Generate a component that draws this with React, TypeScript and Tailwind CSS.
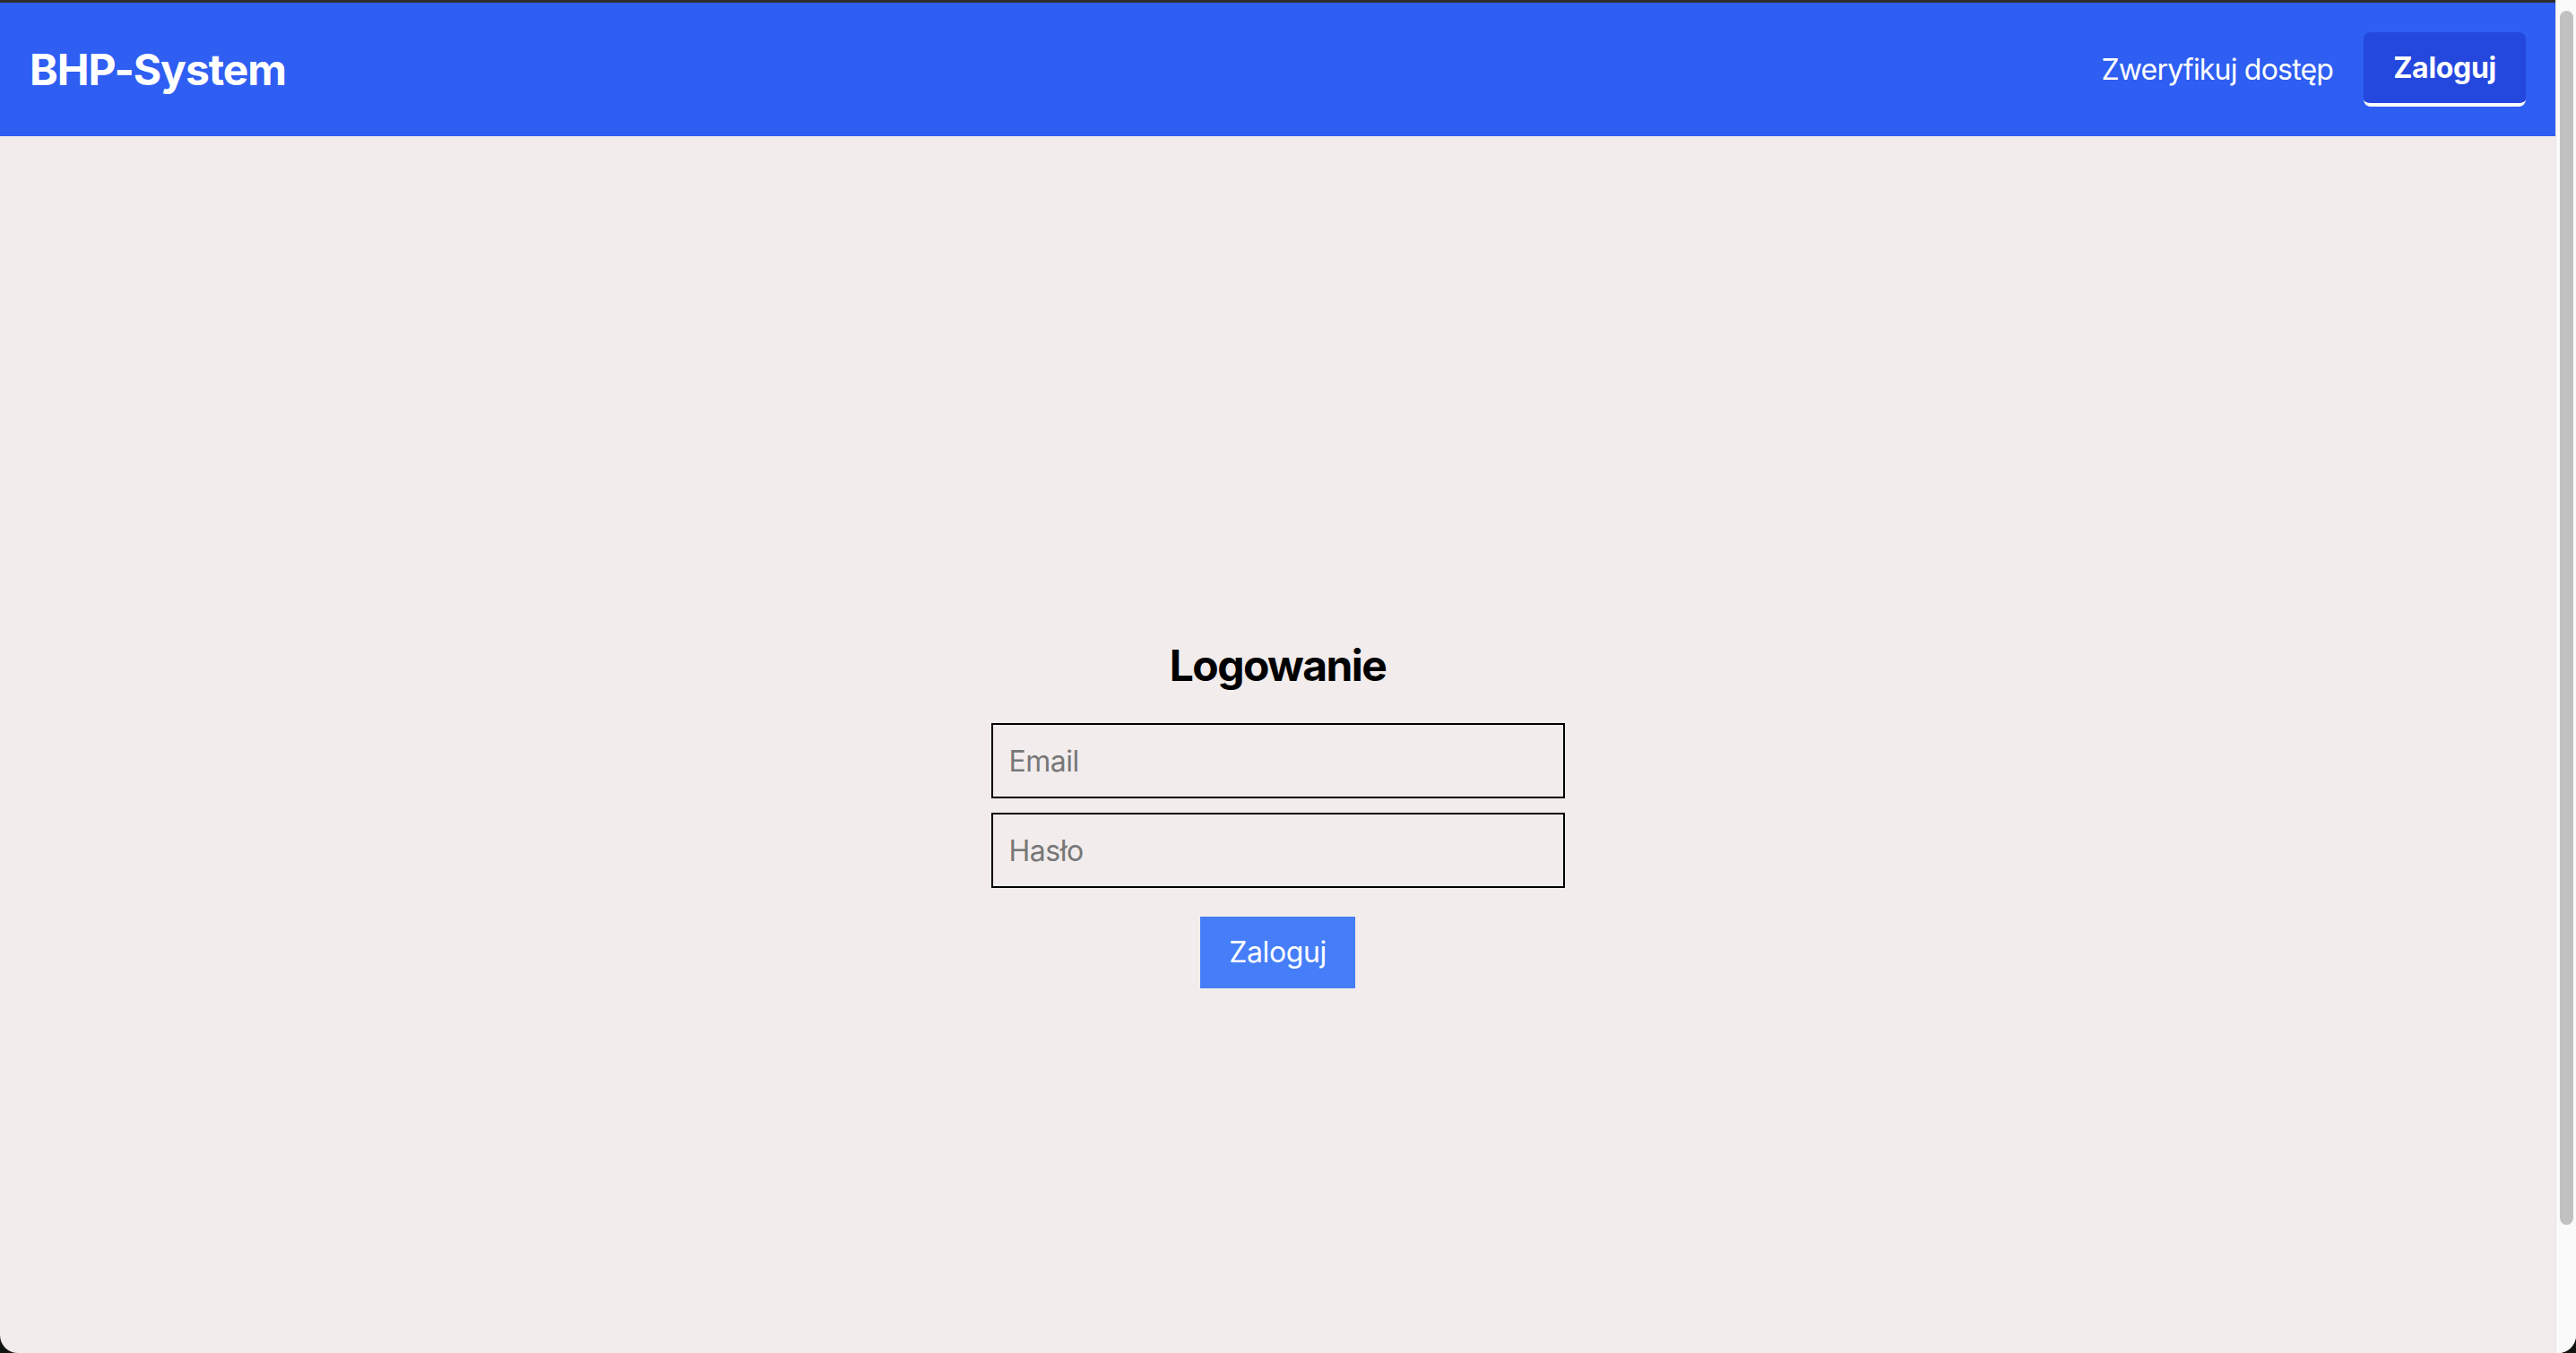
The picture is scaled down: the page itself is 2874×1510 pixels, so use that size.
import React from "react";

export default function App() {
  return (
    <div className="h-[1510px] w-full overflow-hidden bg-[#101510]">
      <div
        className="flex h-full w-full overflow-hidden rounded-b-[20px] bg-[#f2ecec]"
        style={{ fontFamily: "Inter, 'Noto Sans', sans-serif" }}
      >
        {/* PAGE */}
        <div className="flex min-w-0 flex-1 flex-col">
          <div className="h-[3px] shrink-0 bg-[#2e2e2e]" />
          <header className="flex h-[149px] shrink-0 items-center justify-between bg-[#2e5ef2] px-[33px]">
            <h1 className="text-[48px] font-bold tracking-[-1.1px] text-white">BHP-System</h1>
            <nav className="flex items-center gap-[34px]">
              <a href="#" className="text-[32px] tracking-[-0.8px] text-white">
                Zweryfikuj dostęp
              </a>
              <button className="h-[83px] rounded-[8px] border-b-[4px] border-white bg-[#2447de] px-[33px] text-[32px] font-bold tracking-[-0.3px] text-white">
                Zaloguj
              </button>
            </nav>
          </header>

          <main className="flex h-[1510px] shrink-0 flex-col items-center justify-center">
            <h2 className="mb-[32px] text-[48px] leading-[64px] font-bold tracking-[-1.6px] text-black">Logowanie</h2>
            <div className="flex w-[640px] flex-col gap-[16px]">
              <input
                type="email"
                placeholder="Email"
                className="h-[84px] w-full border-2 border-black bg-transparent px-[18px] text-[32px] tracking-[-0.5px] text-black outline-none placeholder:text-[#777777]"
              />
              <input
                type="password"
                placeholder="Hasło"
                className="h-[84px] w-full border-2 border-black bg-transparent px-[18px] text-[32px] tracking-[-0.5px] text-black outline-none placeholder:text-[#777777]"
              />
            </div>
            <button className="mt-[32px] h-[80px] bg-[#457ef8] px-[32px] text-[32px] tracking-[-0.4px] text-white">
              Zaloguj
            </button>
          </main>
        </div>

        {/* SCROLLBAR */}
        <div className="w-[23px] shrink-0 border-l border-[#e6e6e6] bg-[#fafafa] pt-[12px]">
          <div className="mx-auto h-[1355px] w-[15px] rounded-full bg-[#c1c1c1]" />
        </div>
      </div>
    </div>
  );
}
